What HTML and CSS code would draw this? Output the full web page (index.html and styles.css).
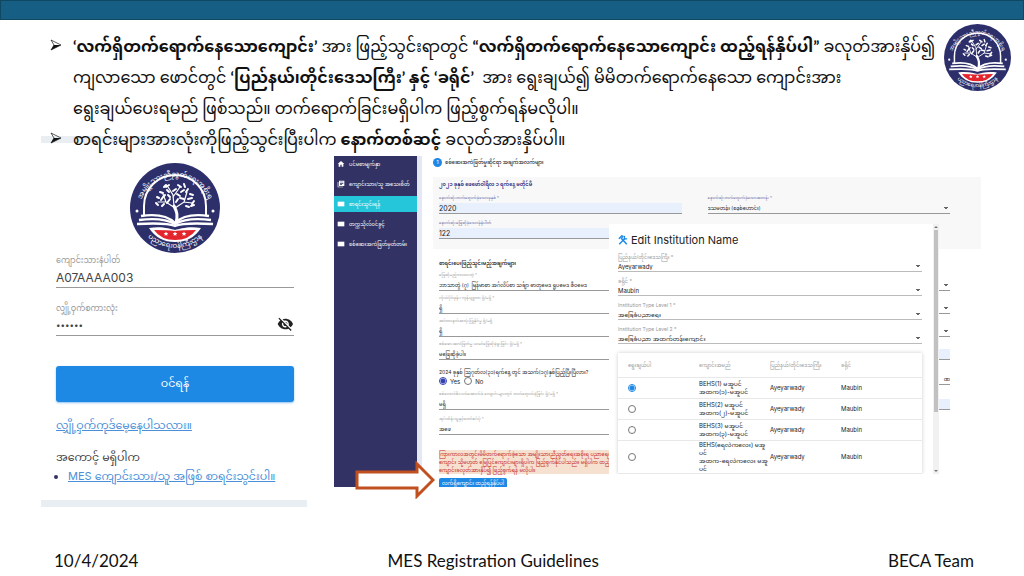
FILE: index.html
```html
<!DOCTYPE html>
<html lang="my">
<head>
  <meta charset="utf-8">
  <title>MES Registration Guidelines</title>
  <link rel="stylesheet" href="styles.css">
</head>
<body>
  <svg class="defs" aria-hidden="true">
    <symbol id="seal" viewBox="0 0 90 90">
      <circle cx="45" cy="45" r="45" fill="#2d2f6b"/>
      <path d="M14 53 V43 A31 31 0 0 1 76 43 V53" fill="none" stroke="#fff" stroke-width="2"/>
      <g fill="none" stroke="#fff" stroke-linecap="round">
        <path d="M46 60 C48 52 47 49 44 43" stroke-width="3"/>
        <path d="M45 45 L36 39 L28 39 M36 39 L33 31 M44 43 L43 32 L38 24 M43 34 L50 24 M45 45 L54 39 L62 40 M54 39 L57 29" stroke-width="1.200"/>
        <path d="M27 34l2 1M26 40l2 2M30 29l3 1M33 34l2-2M37 27l2 2M39 22l-3 2M43 28l3-2M48 22l3 2M51 29l3-2M58 26l-2 3M60 31l3 1M58 36l4-1M64 38l-2 3M40 36l-3 4M50 35l4 1M32 43l2-2M56 43l3 1M47 31l3 2M38 32l2 2M54 21l1 3M31 37l2-3M61 43l3-1M34 24l2-2M46 39l2-3" stroke-width="2"/>
      </g>
      <g fill="none" stroke="#fff" stroke-width="2.400">
        <path d="M11 53 C25 51 38 53 45 60 C52 53 65 51 79 53"/>
        <path d="M9 57 C25 55 38 57 45 61 C52 57 65 55 81 57"/>
        <path d="M7 61 C25 60 38 60 45 63 C52 60 65 60 83 61"/>
      </g>
      <path d="M19 65 C32 63 40 66 45 67 C50 66 58 63 71 65 Q62 79 45 79 Q28 79 19 65z" fill="#fff"/>
      <path d="M24 67 Q38 67 45 68 Q52 67 66 67 Q59 77 45 77 Q31 77 24 67z" fill="#e3262d"/>
      <g fill="#fff">
        <path id="star" d="M45 68.500l.7 1.500 1.600.1-1.200 1.100.4 1.600-1.500-.9-1.500.9.4-1.600-1.200-1.100 1.600-.1z"/>
        <use href="#star" x="-9"/>
        <use href="#star" x="9"/>
        <circle cx="7" cy="48" r="1.500"/>
        <circle cx="83" cy="48" r="1.500"/>
      </g>
      <path id="arc-top" d="M10 41 A36 36 0 0 1 80 41" fill="none"/>
      <path id="arc-bottom" d="M14 70 A40 40 0 0 0 76 70" fill="none"/>
      <text class="seal-text"><textPath href="#arc-top" startOffset="50%">အမျိုးသားညီညွတ်ရေးအစိုးရ</textPath></text>
      <text class="seal-text"><textPath href="#arc-bottom" startOffset="50%">ပညာရေးဝန်ကြီးဌာန</textPath></text>
    </symbol>
  </svg>

  <header class="top-bar"></header>

  <main>
    <section class="intro">
      <ul class="steps">
        <li>
          <svg class="bullet" viewBox="0 0 12 12"><path d="M1 1L11 6L1 11L4 6z" fill="none" stroke="#111" stroke-width=".7"/><path d="M4 6H11L1 11z" fill="#111"/></svg>
          <p><b>‘လက်ရှိတက်ရောက်နေသောကျောင်း’</b> အား ဖြည့်သွင်းရာတွင် <b>“လက်ရှိတက်ရောက်နေသောကျောင်း ထည့်ရန်နှိပ်ပါ”</b> ခလုတ်အားနှိပ်၍<br>
          ကျလာသော ဖောင်တွင် <b>‘ပြည်နယ်၊တိုင်းဒေသကြီး’ နှင့် ‘ခရိုင်’</b>&nbsp; အား ရွေးချယ်၍ မိမိတက်ရောက်နေသော ကျောင်းအား<br>
          ရွေးချယ်ပေးရမည် ဖြစ်သည်။ တက်ရောက်ခြင်းမရှိပါက ဖြည့်စွက်ရန်မလိုပါ။</p>
        </li>
        <li>
          <svg class="bullet" viewBox="0 0 12 12"><path d="M1 1L11 6L1 11L4 6z" fill="none" stroke="#111" stroke-width=".7"/><path d="M4 6H11L1 11z" fill="#111"/></svg>
          <p>စာရင်းများအားလုံးကိုဖြည့်သွင်းပြီးပါက <b>နောက်တစ်ဆင့်</b> ခလုတ်အားနှိပ်ပါ။</p>
        </li>
      </ul>
      <svg class="seal seal-small" role="img" aria-label="Ministry of Education"><use href="#seal"/></svg>
    </section>

    <section class="figures">
      <form class="login">
        <svg class="seal seal-large" role="img" aria-label="Ministry of Education"><use href="#seal"/></svg>
        <div class="login-field">
          <label for="student">ကျောင်းသားနံပါတ်</label>
          <input id="student" type="text" value="A07AAAA003">
        </div>
        <div class="login-field">
          <label for="password">လျှို့ဝှက်စကားလုံး</label>
          <div class="password">
            <input id="password" type="password" value="secret">
            <svg class="eye" viewBox="0 0 24 24"><path fill="#222" d="M12 7c2.760 0 5 2.240 5 5 0 .65-.13 1.260-.36 1.830l2.920 2.920c1.510-1.260 2.700-2.890 3.430-4.750-1.730-4.390-6-7.500-11-7.500-1.400 0-2.740.25-3.980.7l2.160 2.160C10.740 7.130 11.350 7 12 7zM2 4.270l2.280 2.280.46.46C3.080 8.300 1.780 10.020 1 12c1.730 4.390 6 7.500 11 7.500 1.550 0 3.030-.3 4.380-.84l.42.42L19.730 22 21 20.730 3.270 3 2 4.270zM7.530 9.800l1.550 1.550c-.05.21-.08.43-.08.65 0 1.660 1.340 3 3 3 .22 0 .44-.03.65-.08l1.550 1.550c-.67.33-1.410.53-2.200.53-2.760 0-5-2.240-5-5 0-.79.2-1.530.53-2.200zm4.310-.78l3.150 3.150.02-.16c0-1.660-1.340-3-3-3l-.17.01z"/></svg>
          </div>
        </div>
        <button class="login-button" type="button">ဝင်ရန်</button>
        <a class="forgot" href="#">လျှို့ဝှက်ကုဒ်မေ့နေပါသလား။</a>
        <p class="no-account">အကောင့် မရှိပါက</p>
        <ul class="register">
          <li><a href="#">MES ကျောင်းသား/သူ အဖြစ် စာရင်းသွင်းပါ။</a></li>
        </ul>
      </form>

      <div class="portal">
        <div class="portal-screen">
          <nav class="sidebar">
            <a href="#"><svg viewBox="0 0 24 24"><path d="M10 20v-6h4v6h5v-8h3L12 3 2 12h3v8z"/></svg>ပင်မစာမျက်နှာ</a>
            <a href="#"><svg viewBox="0 0 24 24"><path d="M4 6H2v16h16v-2H4zM6 2v16h16V2zm13 9H9V9h10zm-4 4H9v-2h6zm4-8H9V5h10z"/></svg>ကျောင်းသား/သူ အသေးစိတ်</a>
            <a class="active" href="#"><svg viewBox="0 0 24 24"><path d="M2 5h20v14H2z"/></svg>စာရင်းသွင်းရန်</a>
            <a href="#"><svg viewBox="0 0 24 24"><path d="M2 5h20v14H2z"/></svg>တက္ကသိုလ်ဝင်ခွင့်</a>
            <a href="#"><svg viewBox="0 0 24 24"><path d="M2 5h20v14H2z"/></svg>စစ်ဆေးအကဲဖြတ်မှတ်တမ်း</a>
          </nav>

          <form class="exam">
            <h2><span class="badge">1</span>စစ်ဆေးအကဲဖြတ်မှုဆိုင်ရာ အချက်အလက်များ</h2>
            <div class="panel">
              <h3>၂၀၂၁ ခုနှစ် ဖေဖော်ဝါရီလ ၁ ရက်နေ့ မတိုင်မီ</h3>
              <div class="columns">
                <div class="stack wide">
                  <div class="field strong"><label for="year">နောက်ဆုံးတက်ရောက်ခဲ့သောခုနှစ် *</label><input id="year" class="filled number" value="2020"></div>
                  <div class="field strong"><label for="roll">နောက်ဆုံးဖြေဆိုခဲ့သောခုံနံပါတ်</label><input id="roll" class="filled number" value="122"></div>
                </div>
                <div class="stack wide">
                  <div class="field strong"><label for="grade">နောက်ဆုံးတက်ရောက်ခဲ့သောအတန်း *</label><select id="grade"><option>ဒသမတန်း (စနစ်ဟောင်း)</option></select></div>
                </div>
              </div>
            </div>

            <div class="lower">
              <h3>စာရင်းပေးဖြည့်သွင်းမည့်အချက်များ</h3>
              <div class="columns">
                <div>
                  <div class="stack">
                    <div class="field"><label for="subject">ဖြေဆိုမည့်ဘာသာတွဲ *</label><input id="subject" value="ဘာသာတွဲ (၇)  မြန်မာစာ အင်္ဂလိပ်စာ သင်္ချာ ဓာတုဗေဒ ရူပဗေဒ ဇီဝဗေဒ"></div>
                    <div class="field"><label for="net">ကိုယ်ပိုင်ဖုန်း၊ ကွန်ပျူတာ ရှိ/မရှိ *</label><input id="net" value="ရှိ"></div>
                    <div class="field"><label for="phone">အင်တာနက်အသုံးပြုနိုင်မှု ရှိ/မရှိ</label><input id="phone" value="ရှိ"></div>
                    <div class="field"><label for="past">စစ်ဆေးအကဲဖြတ်မှု ယခင်ဖြေဆိုခဲ့ဖူးခြင်း ရှိ/မရှိ *</label><input id="past" value="မဖြေဆိုခဲ့ပါ။"></div>
                  </div>
                  <fieldset>
                    <legend>2024 ခုနှစ် ဩဂုတ်လ(၃၁)ရက်နေ့ တွင် အသက်(၁၇)နှစ်ပြည့်ပြီးပြီလား?</legend>
                    <div class="choices">
                      <label><input type="radio" name="age" checked>Yes</label>
                      <label><input type="radio" name="age">No</label>
                    </div>
                  </fieldset>
                  <div class="stack wide">
                    <div class="field"><label for="cdm">စစ်ကောင်စီလက်အောက်ခံ ကျောင်းများတွင် တက်ရောက်ခဲ့ခြင်း ရှိ/မရှိ *</label><input id="cdm" value="မရှိ"></div>
                    <div class="field"><label for="guardian">အုပ်ထိန်းသူနှင့်တော်စပ်ပုံ *</label><input id="guardian" value="အဖေ"></div>
                  </div>
                </div>
                <div class="stack">
                  <div class="field"><select aria-label="Township"></select></div>
                  <div class="field"><select aria-label="Gender"></select></div>
                  <div class="field"><select aria-label="Ethnicity"></select></div>
                  <div class="field"><input class="filled" aria-label="Phone"></div>
                  <div class="field spaced"><input class="end" aria-label="ID" value="ဏ"></div>
                  <div class="field"><input class="filled" aria-label="Address"></div>
                </div>
              </div>
              <p class="notice">ကြားကာလအတွင်းမိမိတက်ရောက်ခဲ့သော အမျိုးသားညီညွတ်ရေးအစိုးရ ပညာရေး<br>ကျောင်း သို့မဟုတ် မြေပြင်ကျောင်းများရှိပါက ဖြည့်စွက်နိုင်ပါသည်။ မရှိပါက ထည့်<br>ကျောင်းခလုတ်အားနှိပ်၍ ဖြည့်စွက်ရန် မလိုပါ။</p>
              <button class="add-school" type="button">လက်ရှိကျောင်း ထည့်ရန်နှိပ်ပါ</button>
            </div>
          </form>
        </div>

        <form class="modal">
          <div class="modal-body">
            <h2><svg class="tools" viewBox="0 0 24 24"><g fill="none" stroke="#1e88e5"><path d="M9 9L21 22" stroke-width="3.500"/><path d="M3 22L17 8" stroke-width="3.500"/><path d="M2 9L9 2L12 3L7 10" stroke-width="3"/><path d="M16 2L15 9L22 9" stroke-width="3"/></g></svg>Edit Institution Name</h2>
            <div class="modal-field"><label for="region">ပြည်နယ်/တိုင်းဒေသကြီး *</label><select id="region"><option>Ayeyarwady</option></select></div>
            <div class="modal-field"><label for="district">ခရိုင် *</label><select id="district"><option>Maubin</option></select></div>
            <div class="modal-field"><label for="level1">Institution Type Level 1 *</label><select id="level1"><option>အခြေခံပညာရေး</option></select></div>
            <div class="modal-field"><label for="level2">Institution Type Level 2 *</label><select id="level2"><option>အခြေခံပညာ အထက်တန်းကျောင်း</option></select></div>
            <table>
              <thead>
                <tr><th>ရွေးချယ်ပါ</th><th>ကျောင်းအမည်</th><th>ပြည်နယ်/တိုင်းဒေသကြီး</th><th>ခရိုင်</th></tr>
              </thead>
              <tbody>
                <tr><td><input type="radio" name="school" aria-label="BEHS(1)" checked></td><td>BEHS(1) မအူပင်<br>အထက(၁)-မအူပင်</td><td>Ayeyarwady</td><td>Maubin</td></tr>
                <tr><td><input type="radio" name="school" aria-label="BEHS(2)"></td><td>BEHS(2) မအူပင်<br>အထက(၂)-မအူပင်</td><td>Ayeyarwady</td><td>Maubin</td></tr>
                <tr><td><input type="radio" name="school" aria-label="BEHS(3)"></td><td>BEHS(3) မအူပင်<br>အထက(၃)-မအူပင်</td><td>Ayeyarwady</td><td>Maubin</td></tr>
                <tr><td><input type="radio" name="school" aria-label="BEHS"></td><td>BEHS(ရေလဲကလေး) မအူ<br>ပင်<br>အထက-ရေလဲကလေး မအူ<br>ပင်</td><td>Ayeyarwady</td><td>Maubin</td></tr>
              </tbody>
            </table>
          </div>
          <div class="scrollbar"><div class="thumb"></div></div>
        </form>

        <svg class="arrow" viewBox="0 0 80 38"><path d="M2 11H62V3L78 19L62 35V27H2z" fill="#fff" stroke="#c0501f" stroke-width="3"/></svg>
      </div>
    </section>
  </main>

  <footer>
    <span>10/4/2024</span>
    <span>MES Registration Guidelines</span>
    <span>BECA Team</span>
  </footer>
</body>
</html>
```
FILE: styles.css
```css
:root {
  --navy: #323264;
  --blue: #1e88e5;
  --line: #999;
  --fill: #e8f0fe;
  --muted: #999;
}

* {
  box-sizing: border-box;
}

body {
  margin: 0;
  min-height: 100vh;
  display: flex;
  flex-direction: column;
  background: #fff;
  color: #111;
  font-family: Lato, "Noto Sans Myanmar", Padauk, sans-serif;
}

h2, h3, p, ul, fieldset {
  margin: 0;
  padding: 0;
  border: 0;
}

input, select, button {
  font: inherit;
  color: inherit;
  margin: 0;
}

main {
  flex: 1;
}

.defs {
  position: absolute;
  width: 0;
  height: 0;
}

.top-bar {
  height: 20px;
  background: #165e83;
  border: 1px solid #104862;
}

/* bullets */
.intro {
  display: flex;
  justify-content: space-between;
  padding: 10px 13px 0 50px;
}

.steps {
  list-style: none;
  position: relative;
  z-index: 1;
}

.steps li {
  display: flex;
  gap: 11px;
  font-size: 16px;
  line-height: 31px;
  white-space: nowrap;
}

.bullet {
  flex: none;
  width: 12px;
  height: 12px;
  margin-top: 9px;
}

.seal-small {
  flex: none;
  width: 67px;
  height: 67px;
  margin-top: -6px;
}

.seal-text {
  font-size: 7px;
  fill: #fff;
  text-anchor: middle;
}

.figures {
  display: flex;
  align-items: flex-start;
  gap: 27px;
  padding: 2px 43px 0 41px;
}

/* login card */
.login {
  width: 266px;
  flex: none;
  display: flex;
  flex-direction: column;
  margin-top: -20px;
  padding: 20px 13px 15px 15px;
  border: solid #e8eef2;
  border-width: 7px 0;
  font-family: Inter, "Noto Sans Myanmar", Padauk, sans-serif;
  color: #444;
}

.seal-large {
  width: 90px;
  height: 90px;
  align-self: center;
}

.login-field {
  display: flex;
  flex-direction: column;
  height: 48px;
  border-bottom: 1px solid #999;
}

.seal-large + .login-field {
  height: 35px;
}

.login-field label {
  margin-top: auto;
  font-size: 8px;
  line-height: 14px;
  color: var(--muted);
}

.login-field input {
  width: 100%;
  height: 20px;
  padding: 0;
  border: 0;
  background: none;
  font-size: 12px;
}

.login-field input[type=password] {
  font-size: 8px;
}

.password {
  display: flex;
}

.eye {
  width: 18px;
  height: 18px;
}

.login-button {
  height: 36px;
  margin-top: 30px;
  border: 0;
  border-radius: 3px;
  background: var(--blue);
  color: #fff;
  font-size: 11px;
  box-shadow: 0 1px 2px #1e88e580;
}

.login a {
  color: #4a8fd8;
}

.forgot {
  margin-top: 12px;
  font-size: 11px;
  line-height: 22px;
}

.no-account {
  margin-top: 11px;
  font-size: 11px;
  line-height: 20px;
}

.register {
  padding-left: 12px;
  font-size: 11px;
  line-height: 18px;
  white-space: nowrap;
}

.register li::marker {
  color: var(--navy);
}

/* portal */
.portal {
  position: relative;
  flex: 1;
  min-width: 0;
  font-family: Inter, "Noto Sans Myanmar", Padauk, sans-serif;
  font-size: 5px;
  color: #222;
}

.portal-screen {
  display: flex;
}

.sidebar {
  width: 83px;
  flex: none;
  display: flex;
  flex-direction: column;
  gap: 4px;
  background: var(--navy);
}

.sidebar a {
  display: flex;
  align-items: center;
  gap: 4px;
  height: 16px;
  padding-left: 3px;
  color: #fff;
  text-decoration: none;
  white-space: nowrap;
}

.sidebar a.active {
  background: #26c6da;
}

.sidebar svg {
  flex: none;
  width: 8px;
  height: 8px;
  fill: #fff;
}

.exam {
  flex: 1;
  min-width: 0;
  border-left: 5px solid #e3e8f4;
  padding-left: 11px;
}

.exam h2 {
  display: flex;
  align-items: center;
  gap: 3px;
  height: 12px;
  font-size: 5px;
  font-weight: 500;
}

.badge {
  width: 9px;
  height: 9px;
  border-radius: 50%;
  background: var(--blue);
  color: #fff;
  line-height: 9px;
  text-align: center;
}

.panel {
  margin-top: 9px;
  padding: 2px 31px 10px 6px;
  background: #f8f8f8;
}

.exam h3 {
  height: 10px;
  font-size: 5px;
  font-weight: 600;
  line-height: 10px;
  margin-bottom: 4px;
}

.panel h3 {
  margin-bottom: 6px;
  color: #22227a;
}

.lower {
  padding: 9px 31px 0 6px;
}

.columns {
  display: grid;
  grid-template-columns: 1fr 1fr;
  gap: 26px;
}

.columns > * {
  min-width: 0;
}

.stack {
  display: flex;
  flex-direction: column;
  gap: 4px;
}

.stack.wide {
  gap: 6px;
}

.field {
  display: flex;
  flex-direction: column;
  justify-content: flex-end;
  gap: 2px;
  height: 19px;
}

.field label {
  height: 6px;
  font-size: 4px;
  line-height: 6px;
  white-space: nowrap;
  color: var(--muted);
}

.field.strong label {
  color: #6666a0;
}

.field input, .field select {
  width: 100%;
  height: 11px;
  padding: 0;
  border: 0;
  border-bottom: 1px solid var(--line);
  border-radius: 0;
  background: none;
}

.field input.filled {
  background: var(--fill);
}

.field input.number {
  font-size: 7px;
}

.field input.end {
  text-align: right;
}

.field.spaced {
  margin: 2px 0;
}

.field select, .modal-field select {
  appearance: none;
  background: linear-gradient(#666, #666) no-repeat right 2px top 4px / 4px 1px,
              linear-gradient(#666, #666) no-repeat right 3px top 5px / 2px 1px;
}

fieldset {
  height: 31px;
  padding-top: 8px;
  white-space: nowrap;
}

fieldset legend {
  float: left;
  width: 100%;
  height: 9px;
  padding: 0;
  line-height: 9px;
}

.choices {
  clear: both;
  display: flex;
  gap: 4px;
  height: 8px;
  font-size: 6px;
}

.choices label {
  display: flex;
  align-items: center;
  gap: 3px;
}

input[type=radio] {
  appearance: none;
  width: 8px;
  height: 8px;
  border: 1px solid #777;
  border-radius: 50%;
  background: #fff;
}

input[type=radio]:checked {
  border-color: #3340b0;
  background: radial-gradient(#3340b0 2px, #fff 3px);
}

.notice {
  width: 243px;
  height: 24px;
  margin-top: 15px;
  background: #f6e0d0;
  color: #c62828;
  line-height: 8px;
  white-space: nowrap;
}

.add-school {
  display: block;
  width: 68px;
  height: 9px;
  margin-top: 4px;
  padding: 0;
  overflow: hidden;
  border: 0;
  border-radius: 2px 2px 0 0;
  background: var(--blue);
  color: #fff;
  white-space: nowrap;
}

/* dialog over the form */
.modal {
  position: absolute;
  top: 68px;
  left: 275px;
  right: 42px;
  height: 250px;
  display: flex;
  background: #fff;
  overflow: hidden;
}

.modal-body {
  flex: 1;
  padding: 8px 11px 0 9px;
}

.modal h2 {
  display: flex;
  align-items: center;
  gap: 3px;
  height: 16px;
  margin-bottom: 5px;
  font-size: 11px;
  font-weight: 400;
}

.tools {
  width: 10px;
  height: 10px;
}

.modal-field {
  height: 24px;
  padding-top: 1px;
}

.modal-field label {
  display: block;
  height: 7px;
  font-size: 5px;
  line-height: 7px;
  color: var(--muted);
}

.modal-field select {
  display: block;
  width: 100%;
  height: 11px;
  padding: 0;
  border: 0;
  border-bottom: 1px solid #bbb;
  border-radius: 0;
  font-size: 6px;
}

.modal table {
  width: 100%;
  margin-top: 4px;
  border-collapse: collapse;
  table-layout: fixed;
  box-shadow: 0 0 4px #0003;
}

.modal th, .modal td {
  height: 21px;
  padding: 0 0 0 10px;
  border-bottom: 1px solid #e8e8e8;
  text-align: left;
  font-weight: 400;
  font-size: 6px;
  line-height: 8px;
  white-space: nowrap;
}

.modal th {
  width: 71px;
  height: 24px;
  font-size: 5px;
  color: var(--muted);
}

.modal th:last-child {
  width: auto;
}

.modal td input {
  display: block;
}

.modal td input:checked {
  border-color: var(--blue);
  background: radial-gradient(var(--blue) 2px, #fff 3px);
}

.scrollbar {
  display: flex;
  flex-direction: column;
  align-items: center;
  width: 6px;
  padding: 2px 0;
  background: #f1f1f1;
}

.scrollbar::before, .scrollbar::after {
  content: "";
  border: 2px solid transparent;
  border-top-width: 0;
  border-bottom: 2px solid #777;
}

.scrollbar::after {
  margin-top: auto;
  transform: rotate(180deg);
}

.thumb {
  width: 4px;
  height: 182px;
  margin-top: 2px;
  background: #c1c1c1;
}

.arrow {
  position: absolute;
  left: 21px;
  bottom: -12px;
  width: 80px;
  height: 38px;
}

footer {
  display: grid;
  grid-template-columns: 8fr auto 9fr;
  padding: 0 50px 4px 54px;
  font-size: 17px;
  line-height: 22px;
}

footer span:last-child {
  text-align: right;
}
```
